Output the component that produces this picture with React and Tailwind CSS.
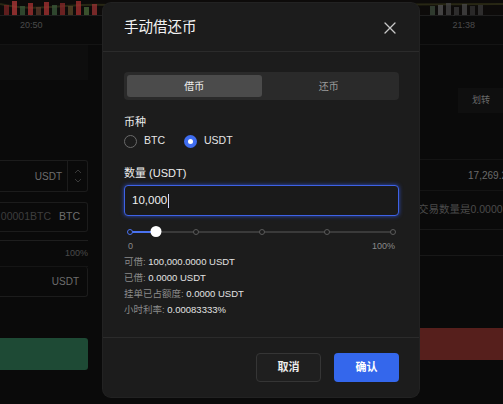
import React from "react";

const font = { fontFamily: '"Liberation Sans", "Noto Sans CJK SC", sans-serif' };

function Candles() {
  // small blurred candle strip along the top of the chart
  const bars = [
    [4, "#7a2424", 10], [12, "#b33a3a", 14], [20, "#3a5a3a", 9], [28, "#a83333", 12],
    [36, "#5b3b2b", 8], [44, "#a33", 13], [52, "#3b5b3b", 10], [60, "#8a2a2a", 12],
    [68, "#5a4a2a", 9], [76, "#a83030", 14], [84, "#4a6a3a", 8], [92, "#933", 11],
    [430, "#3b4b3b", 9], [438, "#555", 10], [446, "#444", 12], [454, "#3a3a3a", 8],
    [462, "#4a4a4a", 11], [470, "#333", 9], [478, "#3a3a3a", 10],
  ];
  return (
    <svg width="503" height="16" className="block">
      <rect width="503" height="16" fill="#0d0b0a" />
      <path d="M0 4 C 40 14, 80 0, 120 6 L 503 4" stroke="#3a3a1a" strokeWidth="2" fill="none" opacity="0.6" />
      {bars.map(([x, c, h], i) => (
        <rect key={i} x={x} y={15 - h} width="5" height={h} fill={c} opacity="0.75" />
      ))}
      <line x1="0" y1="15.5" x2="503" y2="15.5" stroke="#1e1e1e" />
      <line x1="31" y1="15" x2="31" y2="18" stroke="#333" />
      <line x1="454" y1="15" x2="454" y2="18" stroke="#333" />
    </svg>
  );
}

function Radio({ checked, label }) {
  return (
    <div className="flex items-center gap-[7px]">
      {checked ? (
        <span className="flex h-[13px] w-[13px] items-center justify-center rounded-full bg-[#3f6df0]">
          <span className="h-[5px] w-[5px] rounded-full bg-white" />
        </span>
      ) : (
        <span className="h-[13px] w-[13px] rounded-full border border-[#6a6a6a]" />
      )}
      <span className="text-[10.5px] text-[#e6e6e6]">{label}</span>
    </div>
  );
}

function Slider() {
  const marks = [0, 25, 50, 75, 100];
  return (
    <div className="relative mx-[6px] h-[12px]">
      <div className="absolute left-0 right-0 top-[5px] h-[2px] bg-[#3a3a3a]" />
      <div className="absolute left-0 top-[5px] h-[2px] w-[26px] bg-[#4a72f0]" />
      {marks.map((m) => (
        <span
          key={m}
          className={
            "absolute top-[3px] h-[6px] w-[6px] -translate-x-1/2 rounded-full border bg-[#1c1c1c] " +
            (m === 0 ? "border-[#4a72f0]" : "border-[#5a5a5a]")
          }
          style={{ left: `${m}%` }}
        />
      ))}
      <span className="absolute left-[26px] top-0 h-[11px] w-[11px] -translate-x-1/2 rounded-full bg-white" />
    </div>
  );
}

function InfoRow({ label, value }) {
  return (
    <div className="flex h-[16px] items-center text-[9.5px]">
      <span className="text-[#8a8a8a]">{label}:&nbsp;</span>
      <span className="text-[#e2e2e2]">{value}</span>
    </div>
  );
}

function Chevron({ up }) {
  return (
    <svg width="8" height="5" viewBox="0 0 8 5">
      <path d={up ? "M1 4 L4 1 L7 4" : "M1 1 L4 4 L7 1"} stroke="#3a3a3a" strokeWidth="1" fill="none" />
    </svg>
  );
}

function Modal() {
  return (
    <div className="absolute left-[103px] top-[3px] w-[316px] rounded-[8px] bg-[#1c1c1c] shadow-[0_0_0_1px_#222]">
      <div className="flex h-[49px] items-center justify-between border-b border-[#2b2b2b] pl-[21px] pr-[23px]">
        <span className="pt-[2px] text-[14.5px] text-[#f2f2f2]">手动借还币</span>
        <svg width="12" height="12" viewBox="0 0 12 12" className="mt-[2px]">
          <path d="M1 1 L11 11 M11 1 L1 11" stroke="#c8c8c8" strokeWidth="1.3" strokeLinecap="round" />
        </svg>
      </div>

      <div className="px-[20px] pl-[21px] pt-[20px] pb-[18px]">
        <div className="flex h-[28px] rounded-[4px] bg-[#2a2a2a] p-[3px]">
          <div className="flex flex-1 items-center justify-center rounded-[3px] bg-[#4b4b4b] text-[10px] text-[#f0f0f0]">
            借币
          </div>
          <div className="flex flex-1 items-center justify-center text-[10px] text-[#9a9a9a]">还币</div>
        </div>

        <div className="mt-[13px] h-[18px] text-[11px] leading-[18px] text-[#ededed]">币种</div>
        <div className="mt-px flex h-[18px] items-center gap-[19px]">
          <Radio label="BTC" />
          <Radio checked label="USDT" />
        </div>

        <div className="mt-[14px] h-[18px] text-[11px] leading-[18px] text-[#ededed]">数量 (USDT)</div>
        <div className="mt-[3px] flex h-[31px] items-center rounded-[4px] border-[1.5px] border-[#3e62e6] bg-[#1a1a1a] px-[7px] shadow-[0_0_4px_#2c4bc0]">
          <span className="text-[11.5px] text-[#f0f0f0]">10,000</span>
          <span className="ml-px h-[14px] w-px bg-[#cfd8ff]" />
        </div>

        <div className="mt-[10px]">
          <Slider />
        </div>
        <div className="mt-[2px] flex justify-between px-[4px] text-[9px] text-[#8a8a8a]">
          <span>0</span>
          <span>100%</span>
        </div>

        <div className="mt-px flex flex-col">
          <InfoRow label="可借" value="100,000.0000 USDT" />
          <InfoRow label="已借" value="0.0000 USDT" />
          <InfoRow label="挂单已占额度" value="0.0000 USDT" />
          <InfoRow label="小时利率" value="0.00083333%" />
        </div>
      </div>

      <div className="flex justify-end gap-[13px] border-t border-[#2b2b2b] px-[20px] pt-[15px] pb-[15px]">
        <button className="h-[29px] w-[65px] rounded-[4px] border border-[#353535] bg-[#1f1f1f] text-[11px] font-bold text-[#ededed]">
          取消
        </button>
        <button className="h-[29px] w-[65px] rounded-[4px] bg-[#3467ec] text-[11px] font-bold text-white">
          确认
        </button>
      </div>
    </div>
  );
}

export default function App() {
  return (
    <div className="relative h-[404px] w-[503px] overflow-hidden bg-[#0a0a0a]" style={font}>
      <Candles />
      <div className="flex h-[20px] items-center justify-between pl-[20px] pr-[28px] text-[9px] text-[#4a4a4a]">
        <span>20:50</span>
        <span>21:38</span>
      </div>
      <div className="h-[8px]" />
      <div className="h-px bg-[#141414]" />

      <div className="flex">
        {/* left order form */}
        <div className="w-[88px] shrink-0">
          <div className="h-[35px] bg-[#0e0e0e]" />
          <div className="h-[80px]" />
          <div className="flex h-[32px] items-stretch rounded-r-[3px] border border-l-0 border-[#1c1c1c]">
            <span className="flex flex-1 items-center justify-end pr-[5px] text-[10px] text-[#6e6e6e]">USDT</span>
            <span className="flex w-[20px] flex-col items-center justify-center gap-[4px] border-l border-[#1c1c1c]">
              <Chevron up />
              <Chevron />
            </span>
          </div>
          <div className="mt-[10px] flex h-[30px] items-center justify-end gap-[8px] overflow-hidden rounded-r-[3px] border border-l-0 border-[#1c1c1c] pr-[7px] text-[10.5px]">
            <span className="shrink-0 whitespace-nowrap text-[#3e3e3e]">0.00001BTC</span>
            <span className="shrink-0 text-[#6e6e6e]">BTC</span>
          </div>
          <div className="mt-[8px] h-px bg-[#1e1e1e]" />
          <div className="mt-[6px] text-right text-[9px] text-[#4a4a4a]">100%</div>
          <div className="mt-[5px] h-px bg-[#151515]" />
          <div className="flex h-[30px] items-center justify-end rounded-r-[3px] border border-l-0 border-t-0 border-[#1c1c1c] pr-[8px] text-[10px] text-[#6e6e6e]">
            USDT
          </div>
          <div className="mt-[41px] h-[32px] rounded-r-[3px] bg-[#1e4a35]" />
        </div>

        <div className="flex-1" />

        {/* right order form */}
        <div className="w-[85px] shrink-0">
          <div className="h-[43px]" />
          <div className="ml-[40px] flex h-[25px] items-center bg-[#0f0f0f] pl-[14px] text-[9px] text-[#6a6a6a]">划转</div>
          <div className="h-[46px]" />
          <div className="h-px bg-[#141414]" />
          <div className="flex h-[30px] items-center justify-end text-[10px] text-[#6a6a6a]">
            <span className="-mr-[4px] whitespace-nowrap">17,269.2</span>
          </div>
          <div className="h-px bg-[#141414]" />
          <div className="mt-[11px] h-[15px] whitespace-nowrap text-[10.5px] leading-[15px] text-[#4a4a4a]">
            交易数量是0.0000
          </div>
          <div className="mt-[12px] h-px bg-[#181818]" />
          <div className="mt-[25px] h-px bg-[#181818]" />
          <div className="mt-[72px] h-[32px] bg-[#561f1c]" />
        </div>
      </div>

      <Modal />
    </div>
  );
}
